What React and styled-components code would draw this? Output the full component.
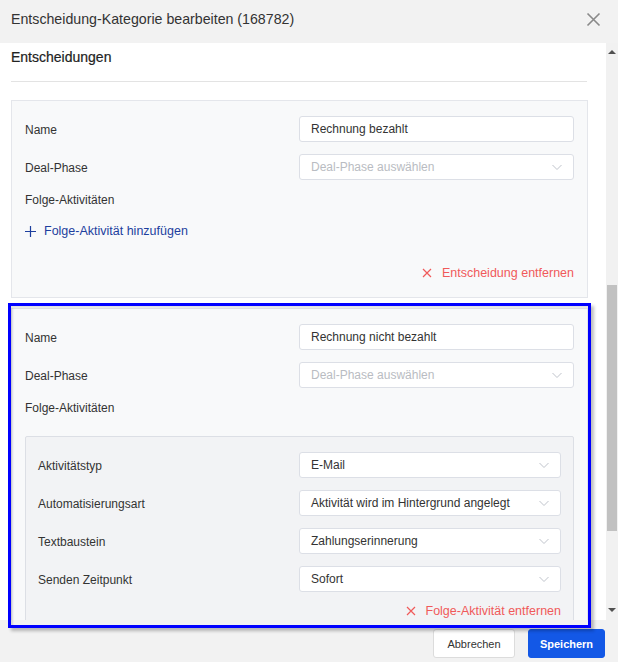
import React from 'react'
import styled, { createGlobalStyle } from 'styled-components'

const GlobalStyle = createGlobalStyle`
  html, body {
    margin: 0;
    padding: 0;
    background: #fff;
  }
  body {
    font-family: "Liberation Sans", Arial, sans-serif;
    color: #333;
  }
  * { box-sizing: border-box; }
`

const decisions = [
  {
    name: 'Rechnung bezahlt',
    followUps: [],
  },
  {
    name: 'Rechnung nicht bezahlt',
    followUps: [
      {
        Aktivitätstyp: 'E-Mail',
        Automatisierungsart: 'Aktivität wird im Hintergrund angelegt',
        Textbaustein: 'Zahlungserinnerung',
        'Senden Zeitpunkt': 'Sofort',
      },
    ],
  },
]

const Chevron = () => (
  <svg width="12" height="12" viewBox="0 0 12 12" fill="none">
    <path d="M1.5 4l4.5 4.5L10.5 4" stroke="#c0c4cc" strokeWidth="1" />
  </svg>
)

const Cross = ({ size = 10, color = '#f05a5a', width = 1.2 }) => (
  <svg width={size} height={size} viewBox="0 0 10 10" fill="none">
    <path d="M1 1l8 8M9 1l-8 8" stroke={color} strokeWidth={width} />
  </svg>
)

function Select({ value, placeholder }) {
  return (
    <SelectBox>
      {value ? <span>{value}</span> : <Placeholder>{placeholder}</Placeholder>}
      <Chevron />
    </SelectBox>
  )
}

function FollowUp({ data }) {
  return (
    <InnerCard>
      {Object.entries(data).map(([label, value]) => (
        <Row key={label} $inner>
          <Label>{label}</Label>
          <Select value={value} />
        </Row>
      ))}
      <RemoveLink $gap={9}>
        <Cross />
        Folge-Aktivität entfernen
      </RemoveLink>
    </InnerCard>
  )
}

function DecisionCard({ decision }) {
  return (
    <Card>
      <Row>
        <Label>Name</Label>
        <TextInput>{decision.name}</TextInput>
      </Row>
      <Row>
        <Label>Deal-Phase</Label>
        <Select placeholder="Deal-Phase auswählen" />
      </Row>
      <SubLabel>Folge-Aktivitäten</SubLabel>
      {decision.followUps.length === 0 ? (
        <>
          <AddLink>
            <svg width="11" height="11" viewBox="0 0 11 11" fill="none">
              <path d="M5.5 0v11M0 5.5h11" stroke="#1d3f9e" strokeWidth="1.2" />
            </svg>
            Folge-Aktivität hinzufügen
          </AddLink>
          <RemoveLink $gap={22}>
            <Cross />
            Entscheidung entfernen
          </RemoveLink>
        </>
      ) : (
        decision.followUps.map((f, i) => <FollowUp key={i} data={f} />)
      )}
    </Card>
  )
}

export default function App() {
  return (
    <Modal>
      <GlobalStyle />
      <Header>
        <Title>Entscheidung-Kategorie bearbeiten (168782)</Title>
        <CloseButton>
          <Cross size={15} color="#8a8a8a" width={1.1} />
        </CloseButton>
      </Header>
      <Body>
        <ScrollArea>
          <SectionTitle>Entscheidungen</SectionTitle>
          <Divider />
          {decisions.map((d) => (
            <DecisionCard key={d.name} decision={d} />
          ))}
        </ScrollArea>
        <Scrollbar>
          <Arrow $up />
          <Thumb />
          <Arrow />
        </Scrollbar>
      </Body>
      <Footer>
        <Button $width={82}>Abbrechen</Button>
        <Button $width={77} $primary>Speichern</Button>
      </Footer>
      <Highlight />
    </Modal>
  )
}

const Modal = styled.div`
  position: relative;
  width: 618px;
  height: 662px;
  display: flex;
  flex-direction: column;
  background: #f2f2f2;
  overflow: hidden;
`

const Header = styled.div`
  height: 43px;
  flex-shrink: 0;
  display: flex;
  align-items: center;
  justify-content: space-between;
  padding: 0 17px 0 11px;
  background: #f2f2f2;
`

const Title = styled.div`
  font-size: 14.2px;
  color: #333;
  margin-top: -6px;
`

const CloseButton = styled.div`
  display: flex;
  margin-top: -4px;
`

const Body = styled.div`
  height: 577px;
  flex-shrink: 0;
  display: flex;
`

const ScrollArea = styled.div`
  flex: 1;
  background: #fff;
  overflow: hidden;
  padding: 4px 18px 0 11px;
`

const SectionTitle = styled.div`
  font-size: 14px;
  line-height: 20px;
  color: #222;
  -webkit-text-stroke: 0.2px #222;
`

const Divider = styled.div`
  height: 1px;
  background: #e3e3e3;
  margin: 14px 1px 18px 0;
`

const Card = styled.div`
  background: #f8f9fa;
  border: 1px solid #e4e6eb;
  padding: 15px 13px 14px 13px;
  margin-bottom: 10px;
  display: flex;
  flex-direction: column;
`

const InnerCard = styled.div`
  background: #f2f3f5;
  border: 1px solid #dcdfe5;
  border-radius: 2px;
  margin-top: 18px;
  padding: 15px 12px 14px 12px;
  display: flex;
  flex-direction: column;
`

const Row = styled.div`
  display: grid;
  grid-template-columns: ${(p) => (p.$inner ? '261px' : '274px')} 1fr;
  align-items: center;
  & + & {
    margin-top: 12px;
  }
`

const Label = styled.div`
  font-size: 12px;
  color: #333;
  padding-top: 1px;
`

const SubLabel = styled(Label)`
  margin-top: 10px;
  padding-top: 0;
  line-height: 20px;
`

const TextInput = styled.div`
  height: 26px;
  display: flex;
  align-items: center;
  padding: 0 11px;
  background: #fff;
  border: 1px solid #dcdfe6;
  border-radius: 3px;
  font-size: 12px;
  color: #333;
`

const SelectBox = styled(TextInput)`
  justify-content: space-between;
  padding-right: 10px;
`

const Placeholder = styled.span`
  color: #b9bcc2;
`

const AddLink = styled.div`
  display: flex;
  align-items: center;
  gap: 8px;
  margin-top: 11px;
  font-size: 12.5px;
  line-height: 20px;
  color: #1d3f9e;
`

const RemoveLink = styled.div`
  align-self: flex-end;
  display: flex;
  align-items: center;
  gap: 10px;
  margin-top: ${(p) => p.$gap}px;
  font-size: 12.5px;
  line-height: 20px;
  color: #f05a5a;
`

const Scrollbar = styled.div`
  width: 12px;
  flex-shrink: 0;
  background: #f1f1f1;
  display: flex;
  flex-direction: column;
  align-items: center;
  padding: 7px 0 8px;
`

const Arrow = styled.div`
  width: 0;
  height: 0;
  border-left: 4px solid transparent;
  border-right: 4px solid transparent;
  ${(p) =>
    p.$up
      ? 'border-bottom: 4px solid #505050;'
      : 'border-top: 4px solid #505050; margin-top: auto;'}
`

const Thumb = styled.div`
  width: 10px;
  height: 246px;
  margin-top: 231px;
  background: #c1c1c1;
`

const Footer = styled.div`
  flex: 1;
  display: flex;
  justify-content: flex-end;
  align-items: flex-start;
  gap: 13px;
  padding: 9px 13px 0 0;
  background: #f2f2f2;
`

const Button = styled.div`
  width: ${(p) => p.$width}px;
  height: 29px;
  display: flex;
  align-items: center;
  justify-content: center;
  border-radius: 3px;
  font-size: 11px;
  font-weight: ${(p) => (p.$primary ? 700 : 400)};
  color: ${(p) => (p.$primary ? '#fff' : '#333')};
  background: ${(p) => (p.$primary ? '#1358e6' : '#fff')};
  border: 1px solid ${(p) => (p.$primary ? '#1358e6' : '#dcdcdc')};
`

const Highlight = styled.div`
  position: absolute;
  left: 8px;
  top: 303px;
  width: 583px;
  height: 325px;
  border: 3px solid #0000ff;
  box-shadow: 3px 3px 3px rgba(0, 0, 0, 0.25), inset 2px 2px 2px rgba(0, 0, 0, 0.12);
  pointer-events: none;
`
